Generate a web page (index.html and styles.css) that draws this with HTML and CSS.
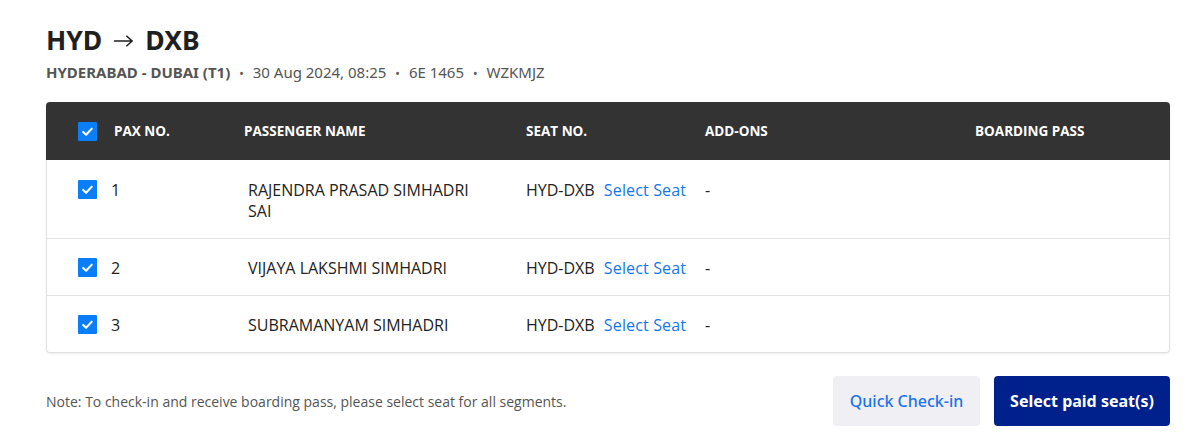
FILE: index.html
```html
<!DOCTYPE html>
<html>
<head>
<meta charset="utf-8">
<link rel="stylesheet" href="styles.css">
</head>
<body>
<div class="page">
  <h1 class="title">HYD<svg class="arrow" viewBox="0 0 22 14"><path d="M1 7h19M14 1.5l6 5.5-6 5.5" fill="none" stroke="#1f1f1f" stroke-width="1.6"/></svg>DXB</h1>
  <div class="sub"><b>HYDERABAD - DUBAI (T1)</b><span class="dot">&bull;</span>30 Aug 2024, 08:25<span class="dot">&bull;</span>6E 1465<span class="dot">&bull;</span>WZKMJZ</div>

  <div class="table">
    <div class="head">
      <div class="c-check"><span class="cb"><svg viewBox="0 0 20 20"><path d="M5.5 10.5l3 3 6-6.5" fill="none" stroke="#fff" stroke-width="2.2" stroke-linecap="round" stroke-linejoin="round"/></svg></span></div>
      <div class="c-pax">PAX NO.</div>
      <div class="c-name">PASSENGER NAME</div>
      <div class="c-seat">SEAT NO.</div>
      <div class="c-add">ADD-ONS</div>
      <div class="c-bp">BOARDING PASS</div>
    </div>
    <div class="row">
      <div class="c-check"><span class="cb"><svg viewBox="0 0 20 20"><path d="M5.5 10.5l3 3 6-6.5" fill="none" stroke="#fff" stroke-width="2.2" stroke-linecap="round" stroke-linejoin="round"/></svg></span></div>
      <div class="c-pax">1</div>
      <div class="c-name n">RAJENDRA PRASAD SIMHADRI SAI</div>
      <div class="c-seat">HYD-DXB <a class="sel">Select Seat</a></div>
      <div class="c-add">-</div>
      <div class="c-bp"></div>
    </div>
    <div class="row">
      <div class="c-check"><span class="cb"><svg viewBox="0 0 20 20"><path d="M5.5 10.5l3 3 6-6.5" fill="none" stroke="#fff" stroke-width="2.2" stroke-linecap="round" stroke-linejoin="round"/></svg></span></div>
      <div class="c-pax">2</div>
      <div class="c-name n">VIJAYA LAKSHMI SIMHADRI</div>
      <div class="c-seat">HYD-DXB <a class="sel">Select Seat</a></div>
      <div class="c-add">-</div>
      <div class="c-bp"></div>
    </div>
    <div class="row">
      <div class="c-check"><span class="cb"><svg viewBox="0 0 20 20"><path d="M5.5 10.5l3 3 6-6.5" fill="none" stroke="#fff" stroke-width="2.2" stroke-linecap="round" stroke-linejoin="round"/></svg></span></div>
      <div class="c-pax">3</div>
      <div class="c-name n">SUBRAMANYAM SIMHADRI</div>
      <div class="c-seat">HYD-DXB <a class="sel">Select Seat</a></div>
      <div class="c-add">-</div>
      <div class="c-bp"></div>
    </div>
  </div>

  <div class="foot">
    <div class="note">Note: To check-in and receive boarding pass, please select seat for all segments.</div>
    <div class="btns">
      <button class="btn quick">Quick Check-in</button>
      <button class="btn paid">Select paid seat(s)</button>
    </div>
  </div>
</div>
</body>
</html>
```
FILE: styles.css
```css
* { box-sizing: border-box; }
body { margin: 0; background: #fff; font-family: "Open Sans", "Noto Sans", sans-serif; color: #222; }
.page { padding: 24px 33px 0 46px; width: 1203px; }
.title { margin: 0; font-family: "Noto Sans", sans-serif; font-size: 26.5px; font-weight: 700; line-height: 32px; color: #1f1f1f; display: flex; align-items: center; }
.arrow { width: 21px; height: 14px; margin: 0 11px; position: relative; top: 1px; }
.sub { margin-top: 6px; font-family: "Noto Sans", sans-serif; font-size: 15px; line-height: 20px; color: #555; }
.sub b { font-weight: 700; }
.dot { margin: 0 9px; font-size: 12px; }
.table { margin-top: 18px; width: 1124px; border: 1px solid #e1e1e1; border-top: none; border-radius: 4px; box-shadow: 0 1px 2px rgba(0,0,0,0.08); }
.head, .row { display: grid; grid-template-columns: 36px 130px 282px 179px 270px 1fr; align-items: start; }
.head { background: #333; color: #fff; height: 58px; align-items: center; border-radius: 4px 4px 0 0; margin: 0 -1px; padding-left: 32px; font-size: 13.5px; font-weight: 700; }
.row { padding: 19px 0 16px 31px; border-top: 1px solid #e3e3e3; font-size: 16px; line-height: 21px; color: #222; }
.head + .row { border-top: none; padding-top: 20px; }
.row .c-name { padding-left: 4px; padding-right: 50px; }
.row .c-pax { margin-left: -3px; }
.cb { display: block; width: 19px; height: 19px; background: #0a7ef7; border-radius: 1px; }
.cb svg { display: block; width: 19px; height: 19px; }
.sel { color: #1478eb; margin-left: 5px; letter-spacing: 0.15px; }
.foot { display: flex; justify-content: space-between; align-items: center; width: 1124px; margin-top: 23px; }
.note { font-size: 14px; color: #555; }
.btns { display: flex; gap: 14px; }
.btn { border: none; height: 50px; border-radius: 4px; font-family: "Noto Sans", sans-serif; font-size: 16px; padding: 0; }
.quick { width: 147px; background: #f0eff4; color: #1a74e6; font-weight: 500; }
.paid { width: 176px; background: #00218c; color: #fff; font-weight: 700; }
```
